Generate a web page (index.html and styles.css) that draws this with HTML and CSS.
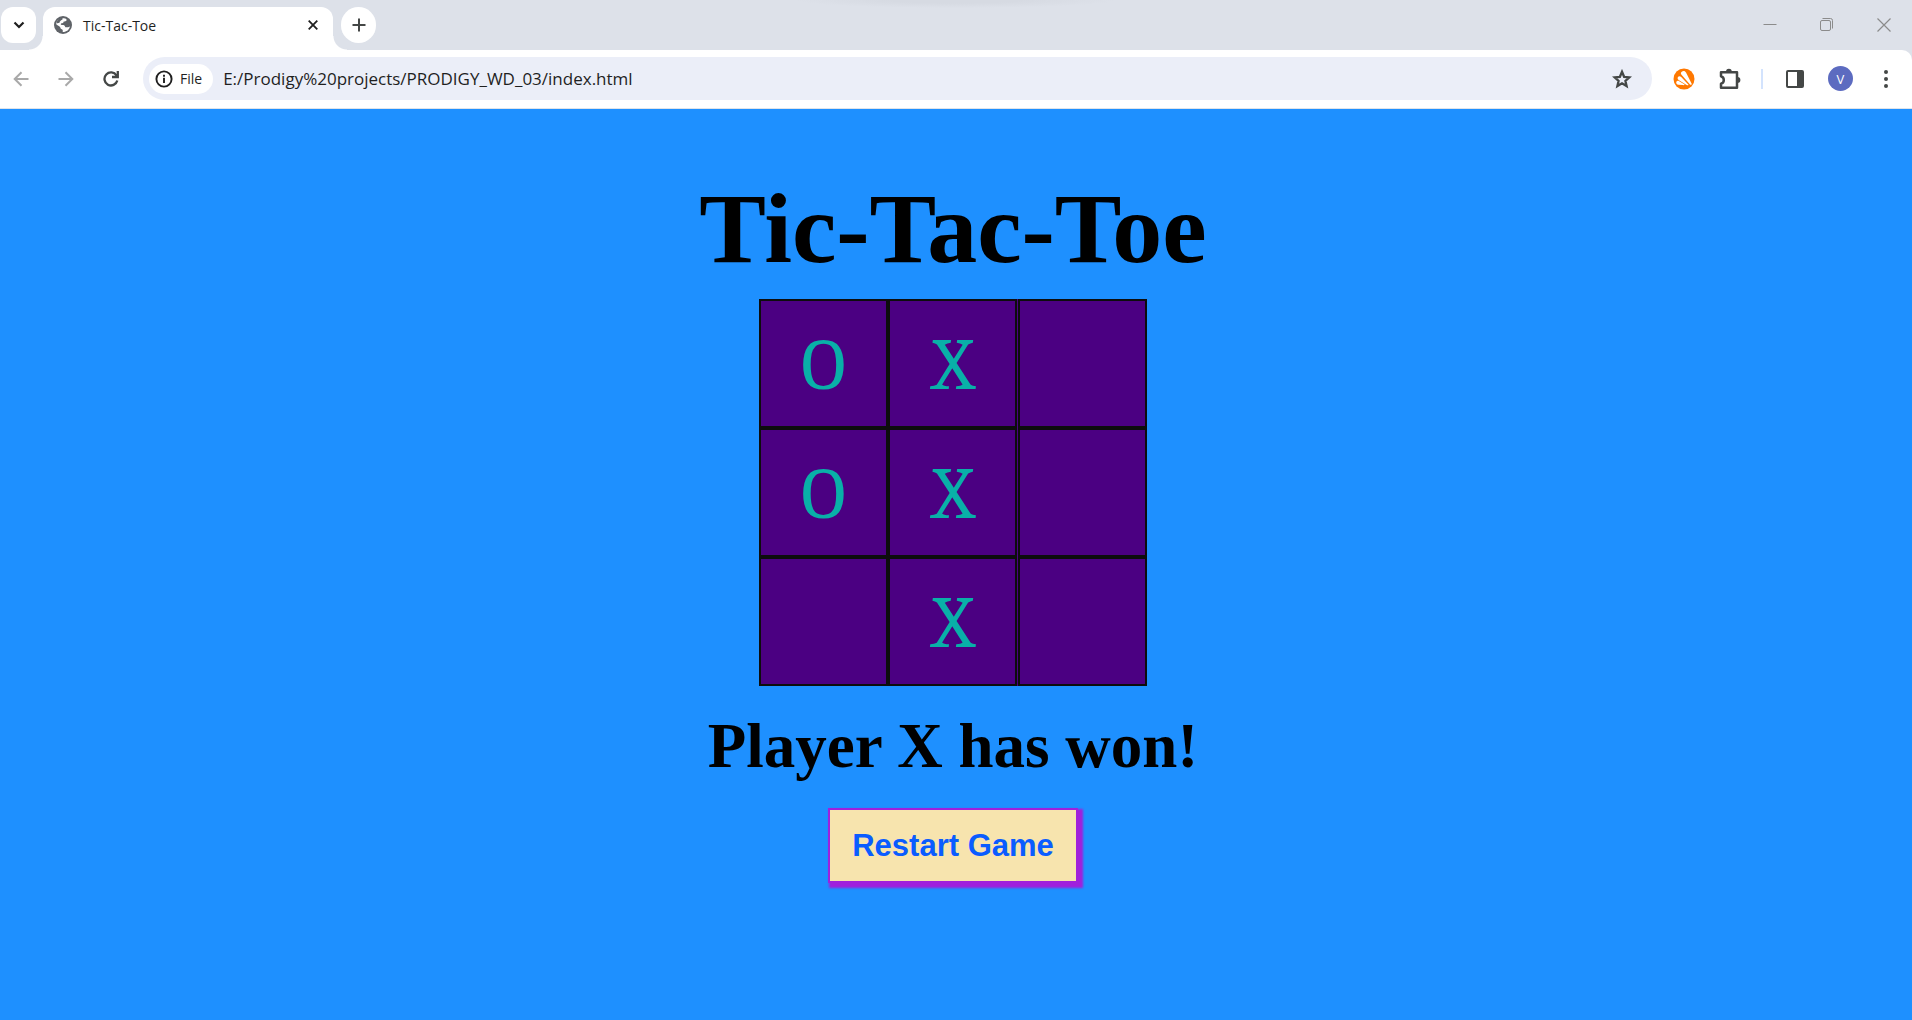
FILE: index.html
```html
<!DOCTYPE html>
<html lang="en">
<head>
<meta charset="utf-8">
<title>Tic-Tac-Toe</title>
<link rel="stylesheet" href="styles.css">
</head>
<body>
<header class="browser">
  <div class="tab-strip">
    <button class="tab-search" aria-label="Search tabs"><svg width="12" height="8" viewBox="0 0 12 8"><path d="M1.500 1.500 6 6l4.500-4.500" fill="none" stroke="#1f1f1f" stroke-width="2.200"/></svg></button>
    <div class="tab">
      <svg width="18" height="18" viewBox="0 0 18 18"><circle cx="9" cy="9" r="9" fill="#5f6368"/><path d="M9.800 2.200c2.200.2 3.200 1 2.700 2.200-.5 1-1.800.7-2.600 1.200-.6.400-.2 1.200-1.100 1.500-.8.300-1.800 0-2 .8-.2.900.7 1 1.700 1 1.600 0 2.300.5 2.500 1.500.2.800 1 .9 2.200.8 1.300-.1 2-.4 2.700-1C15.500 13.500 12.700 16 8.800 16c-.3-.8.3-1.700-.3-2.300C7.800 13 6.500 13 6.300 11.500 6.100 10.300 4 9.800 2 8 2.500 4.500 5.500 1.900 9.800 2.200z" fill="#fff"/><path d="M8.500 1.800C5 2 3 4.500 2.300 7.500l3.200-.8c.3-1.700 1.700-2.600 3-3.200z" fill="#5f6368"/></svg>
      <span class="tab-title">Tic-Tac-Toe</span>
      <button class="tab-close" aria-label="Close tab"><svg width="10" height="10" viewBox="0 0 10 10"><path d="M.7.700l8.600 8.600M9.300.700.700 9.300" stroke="#1f1f1f" stroke-width="1.800"/></svg></button>
    </div>
    <button class="new-tab" aria-label="New tab"><svg width="14" height="14" viewBox="0 0 14 14"><path d="M7 .5v13M.5 7h13" stroke="#444746" stroke-width="2"/></svg></button>
    <div class="window-controls">
      <button aria-label="Minimize"><svg width="14" height="14" viewBox="0 0 14 14"><path d="M.5 6.500h13" stroke="#8b8b8b"/></svg></button>
      <button aria-label="Restore"><svg width="14" height="14" viewBox="0 0 14 14" fill="none" stroke="#8b8b8b"><rect x=".5" y="2.500" width="10" height="10" rx="1.500"/><path d="M2.500.500h8a2 2 0 0 1 2 2v8"/></svg></button>
      <button aria-label="Close"><svg width="14" height="14" viewBox="0 0 14 14"><path d="M.5.500l13 13M13.500.500l-13 13" stroke="#8b8b8b" stroke-width="1.200"/></svg></button>
    </div>
  </div>
  <div class="toolbar">
    <div class="nav">
      <button aria-label="Back"><svg width="16" height="16" viewBox="0 0 16 16" fill="none" stroke="#a9a9a9" stroke-width="2"><path d="M15.500 8H2M8.500 1.200 1.700 8l6.800 6.800"/></svg></button>
      <button aria-label="Forward"><svg width="16" height="16" viewBox="0 0 16 16" fill="none" stroke="#a9a9a9" stroke-width="2"><path d="M.5 8H14M7.500 1.200 14.300 8l-6.800 6.800"/></svg></button>
      <button aria-label="Reload"><svg width="16" height="16" viewBox="0 0 16 16" fill="none" stroke="#444746" stroke-width="2.300"><path d="M14.300 9.500A6.500 6.500 0 1 1 13.500 4.500L15 6M14.800 0v6H9"/></svg></button>
    </div>
    <div class="omnibox">
      <button class="site-chip"><svg width="18" height="18" viewBox="0 0 18 18"><circle cx="9" cy="9" r="7.600" fill="none" stroke="#1f1f1f" stroke-width="1.900"/><path d="M9 7.800v5.200M9 4.800v2" stroke="#1f1f1f" stroke-width="1.900"/></svg>File</button>
      <input class="url" type="text" aria-label="Address" value="E:/Prodigy%20projects/PRODIGY_WD_03/index.html">
      <button class="bookmark" aria-label="Bookmark this page"><svg width="20" height="20" viewBox="0 0 20 20"><path d="M10 2.800l2.100 5 5.300.5-4 3.500 1.200 5.300L10 14.300l-4.600 2.800 1.200-5.300-4-3.500 5.300-.5z" fill="none" stroke="#444746" stroke-width="2.300"/></svg></button>
    </div>
    <div class="actions">
      <button class="ext" aria-label="Avast"><svg width="22" height="22" viewBox="0 0 22 22"><circle cx="11" cy="11" r="10.500" fill="#ff7800"/><path d="M8.500 4c1.500-1.800 3.700-1.300 4.500.6L18.800 16c-.4.900-1 1.100-1.800.6L8.300 6.500C7.700 5.500 7.800 4.600 8.500 4zM5 9c.8-1.100 2.200-1 3.200.1l7.300 7.600c-.4.700-1.100.6-1.900.2L5.600 12C4.600 11.200 4.300 9.900 5 9zM3.300 14c.4-1.200 1.600-1.400 2.900-.8l5.500 3.200c-.3.800-1 .8-2 .7l-4.200-.4C3.700 16.500 2.900 15.300 3.300 14z" fill="#fff"/></svg></button>
      <button aria-label="Extensions"><svg width="22" height="22" viewBox="0 0 22 22"><path d="M2 4.200h16v15.600H2v-4c1.800-.5 2.800-1.900 2.800-3.800S3.800 8.700 2 8.200z" fill="none" stroke="#444746" stroke-width="2.500" stroke-linejoin="round"/><path d="M7 3.600a2.900 2.900 0 0 1 5.800 0zM18.500 9a2.900 2.900 0 0 1 0 5.800z" fill="#444746"/></svg></button>
      <span class="divider"></span>
      <button aria-label="Side panel"><svg width="18" height="18" viewBox="0 0 18 18"><rect x="1" y="1" width="16" height="16" rx="1" fill="none" stroke="#444746" stroke-width="2"/><path d="M11 1h6v16h-6z" fill="#444746"/></svg></button>
      <button class="avatar" aria-label="Profile">V</button>
      <button class="more" aria-label="Menu"><svg width="4" height="18" viewBox="0 0 4 18" fill="#444746"><circle cx="2" cy="2" r="2"/><circle cx="2" cy="9" r="2"/><circle cx="2" cy="16" r="2"/></svg></button>
    </div>
  </div>
</header>
<main class="game">
  <h1 class="title">Tic-Tac-Toe</h1>
  <div class="board">
    <button class="cell">O</button><button class="cell">X</button><button class="cell" aria-label="Empty"></button>
    <button class="cell">O</button><button class="cell">X</button><button class="cell" aria-label="Empty"></button>
    <button class="cell" aria-label="Empty"></button><button class="cell">X</button><button class="cell" aria-label="Empty"></button>
  </div>
  <h2 class="status">Player X has won!</h2>
  <button class="restart">Restart Game</button>
</main>
</body>
</html>
```
FILE: styles.css
```css
* { box-sizing: border-box; }

body {
  margin: 0;
  min-height: 100vh;
  display: flex;
  flex-direction: column;
  background: #1e90ff;
  font-family: "Liberation Serif", "Times New Roman", serif;
}

button {
  padding: 0;
  border: 0;
  background: none;
  font: inherit;
  color: inherit;
}

svg { display: block; }

.browser {
  background: #dde1e9;
  color: #1f1f1f;
  font-family: "Segoe UI", "Open Sans", sans-serif;
}

.browser button {
  display: flex;
  align-items: center;
  justify-content: center;
}

.tab-strip {
  height: 50px;
  display: flex;
  align-items: flex-end;
  background: radial-gradient(ellipse 160px 8px at 50% 0, #d6dae2 40%, transparent);
}

.tab-search,
.new-tab {
  width: 35px;
  height: 36px;
  margin: 0 7px 7px 1px;
  border-radius: 12px;
}

.browser .tab-search,
.browser .new-tab { background: #fff; }

.new-tab { margin: 0 0 7px 8px; border-radius: 18px; }

.tab {
  position: relative;
  width: 290px;
  height: 43px;
  padding: 0 15px 7px 11px;
  display: flex;
  align-items: center;
  gap: 11px;
  border-radius: 12px 12px 0 0;
  background: #fff;
  font-size: 14px;
}

.tab::before,
.tab::after {
  content: "";
  position: absolute;
  bottom: 0;
  width: 14px;
  height: 14px;
}

.tab::before { right: 100%; background: radial-gradient(circle at 0 0, transparent 13px, #fff 14px); }
.tab::after { left: 100%; background: radial-gradient(circle at 100% 0, transparent 13px, #fff 14px); }

.tab-title { flex: 1; }

.window-controls {
  margin: 0 21px 18px auto;
  display: flex;
  gap: 43px;
}

.toolbar {
  height: 59px;
  padding: 0 24px 1px 13px;
  display: flex;
  align-items: center;
  border-bottom: 1px solid #dee3ea;
  border-radius: 0 10px 0 0;
  background: #fff;
}

.nav { display: flex; gap: 29px; margin-right: 24px; }

.omnibox {
  flex: 1;
  height: 43px;
  padding: 0 20px 0 6px;
  display: flex;
  align-items: center;
  border-radius: 22px;
  background: #ebeef8;
}

.omnibox .site-chip {
  height: 30px;
  padding: 0 11px 0 6px;
  gap: 7px;
  border-radius: 15px;
  background: #fff;
  font-size: 14px;
}

.url {
  flex: 1;
  min-width: 0;
  margin-left: 10px;
  padding: 0;
  border: 0;
  background: none;
  color: inherit;
  font: 17px "Segoe UI", "Open Sans", sans-serif;
}

.actions { display: flex; align-items: center; margin-left: 21px; }
.ext { margin-right: 24px; }
.divider { width: 2px; height: 20px; margin: 0 23px 0 20px; background: #d3e3fd; }

.browser .avatar {
  width: 25px;
  height: 25px;
  margin: 0 31px 0 24px;
  border-radius: 50%;
  background: #5c6bc0;
  color: #fff;
  font-size: 13px;
}

.game {
  flex: 1;
  padding: 60px 6px 60px 0;
  display: flex;
  flex-direction: column;
  align-items: center;
  color: #000;
}

.title {
  margin: 0 0 10px;
  font-size: 100px;
  line-height: 120px;
}

.board {
  width: 388px;
  display: grid;
  grid-template-columns: repeat(3, 1fr);
  background: #4b0082;
}

.cell {
  width: 129px;
  height: 129px;
  padding-top: 3px;
  border: 2px solid #0d0d0d;
  background: #4b0082;
  color: #09b0a8;
  font-family: Cambria, "DejaVu Serif Condensed", "DejaVu Serif", serif;
  font-size: 74px;
  line-height: 87px;
}

.status {
  margin: 24px 0 25px;
  font-size: 63px;
  line-height: 73px;
}

.restart {
  width: 250px;
  height: 75px;
  border: 2px solid #a020dc;
  background: #f7e4ae;
  box-shadow: 3px 3px 2px 2px #a020dc;
  color: #0a5cff;
  font: bold 31px "Liberation Sans", Arial, sans-serif;
}
```
